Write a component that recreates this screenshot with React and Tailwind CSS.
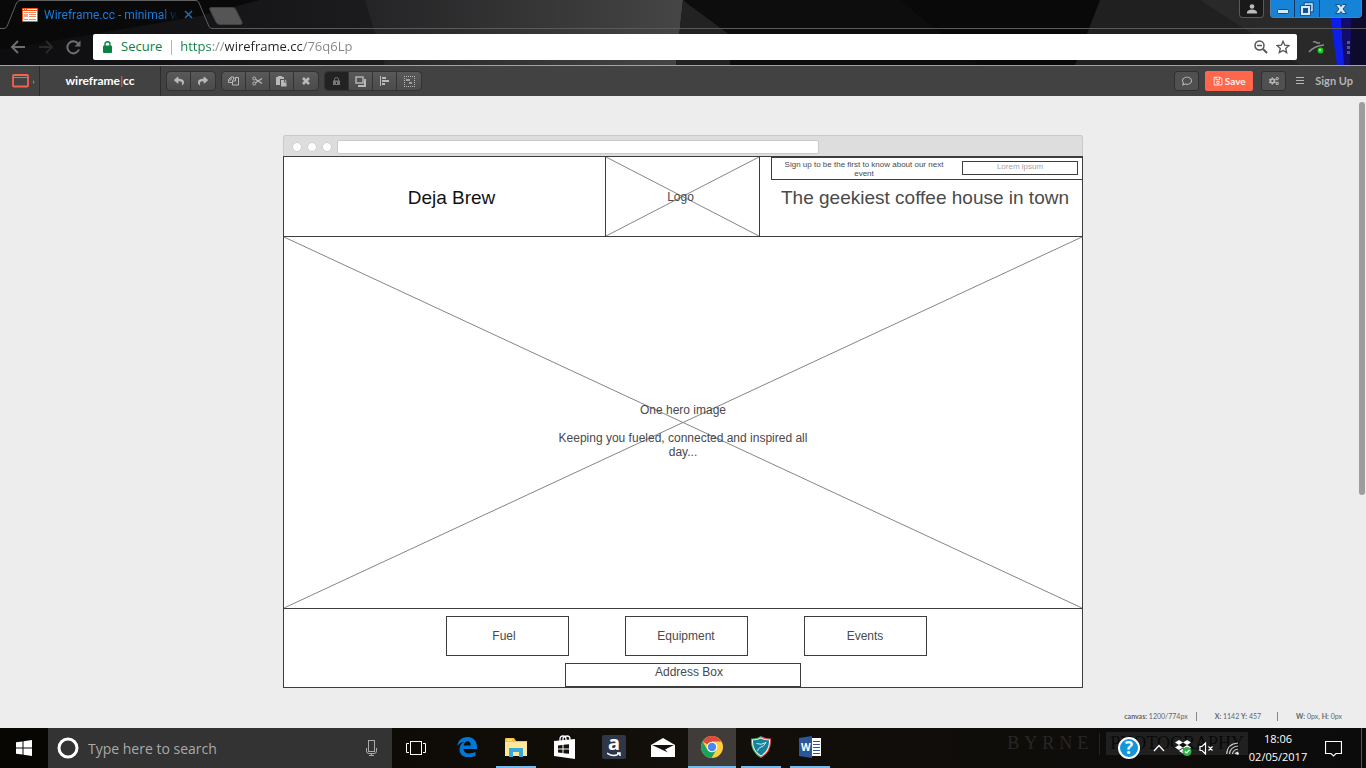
import React from "react";
import { FaReply, FaShare, FaRegComment, FaRegSave, FaCogs } from "react-icons/fa";

function Cross() {
  return (
    <svg className="absolute inset-0 h-full w-full" viewBox="0 0 100 100" preserveAspectRatio="none" aria-hidden="true">
      <path d="M0 0L100 100M100 0L0 100" stroke="#858585" strokeWidth="1" vectorEffect="non-scaling-stroke" fill="none" />
    </svg>
  );
}

function WindowBackdrop() {
  return (
    <>
      <svg className="absolute inset-0 h-full w-full" viewBox="0 0 1366 65" preserveAspectRatio="none" aria-hidden="true">
        <defs>
          <linearGradient id="glass" x1="0" x2="1" y1="0" y2="0">
            <stop offset="0" stopColor="#0d0c0f" />
            <stop offset="1" stopColor="#1c1b1e" />
          </linearGradient>
          <linearGradient id="sheen" x1="0" x2="1" y1="0" y2="0">
            <stop offset="0" stopColor="#242426" />
            <stop offset="1" stopColor="#454545" />
          </linearGradient>
        </defs>
        <path d="M0 0H1366V65H0Z" fill="#090909" />
        <path d="M0 65V50L200 16 260 0H370L390 65Z" fill="url(#glass)" />
        <path d="M365 0H683L676 65H385Z" fill="url(#sheen)" />
        <path d="M683 0L730 35V65H676Z" fill="#222223" />
        <path d="M683 0H900L980 65H730V35Z" fill="#0d0d0d" />
        <path d="M1100 0H1366V65H1075Z" fill="#202021" />
        <path d="M1200 0H1366V65H1300Z" fill="#29292a" />
      </svg>
      <svg className="absolute top-0 right-0" width="60" height="65" aria-hidden="true">
        <path d="M20 0H60V65H42Z" fill="#0d0b2c" />
        <path d="M22 0H34L38 65H31Z" fill="#0d1ee8" />
        <path d="M34 0H46L44 65H38Z" fill="#140c6a" />
      </svg>
    </>
  );
}

function BrowserTabs() {
  return (
    <div className="flex h-[29px] items-start">
      <div className="relative h-[29px] w-[212px]">
        <svg className="absolute inset-0" width="212" height="29" fill="none" aria-hidden="true">
          <path d="M0 28.500H4Q6 28.500 7 26.500L16.500 3Q18 .5 20 .5H196Q198 .5 199 3L209 26.500Q210 28.500 212 28.500" stroke="#5f6061" />
        </svg>
        <div className="relative flex h-[29px] items-center pl-[22px]">
          <svg width="16" height="14" viewBox="0 0 16 14" aria-hidden="true">
            <rect width="16" height="14" rx="1" fill="#f2541b" />
            <path d="M1 3h14v10H1z" fill="#fff" />
            <path d="M1 1h1v1H1zM3 1h1v1H3zM5 1h10v1H5z" fill="#fff" />
            <path d="M2 4h12v1H2zM7 6h7v1H7zM7 8h7v1H7zM2 11h4v1H2zM7 11h7v1H7z" fill="#f58a5c" />
            <path d="M2 6h4v3H2z" fill="#f9a98a" />
          </svg>
          <span className="ml-[6px] w-[134px] bg-linear-to-r from-[#1a7fe0] from-88% to-transparent bg-clip-text font-['Roboto',sans-serif] text-[12px] whitespace-nowrap text-transparent">
            Wireframe.cc - minimal w
          </span>
          <button aria-label="Close tab" className="ml-[6px]">
            <svg width="9" height="9" stroke="#1d6eb0" strokeWidth="1.500" aria-hidden="true"><path d="M1 1L8 8M8 1L1 8" /></svg>
          </button>
        </div>
      </div>
      <div className="flex h-[29px] flex-1 items-start border-b border-[#5a5a5b]">
        <button aria-label="New tab" className="mt-[7px] ml-[-3px]">
          <svg width="34" height="18" aria-hidden="true"><path d="M2 .5H24Q26 .5 27 3L33 15Q34 17.500 31 17.500H11Q8 17.500 7 15L1 3Q0 .5 2 .5Z" fill="#555" stroke="#414142" /></svg>
        </button>
        <div className="flex-1" />
        <button aria-label="Profile" className="mr-[6px] flex h-[18px] w-[25px] items-center justify-center rounded-b-[4px] border border-t-0 border-[#58595a] bg-[#19191a]">
          <svg width="10" height="10" fill="#bcbcbc" aria-hidden="true"><circle cx="5" cy="2.500" r="2.300" /><path d="M0 9.500V8Q1 5.500 5 5.500T10 8V9.500Z" /></svg>
        </button>
        <div className="mr-[4px] flex h-[18px] overflow-hidden rounded-b-[4px] border border-t-0 border-[#5d7ba0] bg-[#1583d7]">
          <button aria-label="Minimise" className="flex w-[24px] items-center justify-center border-r border-[#14365e]">
            <svg width="12" height="14" aria-hidden="true"><rect x=".5" y="7.500" width="11" height="4" rx="1" fill="#d5eaf8" stroke="#174c82" /></svg>
          </button>
          <button aria-label="Restore" className="flex w-[25px] items-center justify-center border-r border-[#14365e]">
            <svg width="14" height="14" fill="none" aria-hidden="true">
              <path d="M5.500 4V2H12V8.500H10" stroke="#174c82" strokeWidth="3.500" /><path d="M5.500 4V2H12V8.500H10" stroke="#d5eaf8" strokeWidth="1.500" />
              <rect x="2" y="5" width="7" height="7" fill="#1583d7" stroke="#174c82" strokeWidth="3.500" /><rect x="2" y="5" width="7" height="7" stroke="#d5eaf8" strokeWidth="2" /><rect x="4" y="7" width="3" height="3" fill="#174c82" />
            </svg>
          </button>
          <button aria-label="Close" className="flex w-[41px] items-center justify-center">
            <svg width="12" height="12" aria-hidden="true"><path d="M.5 1.500H4.500L6 3.500 7.500 1.500H11.500L8 6 11.500 10.500H7.500L6 8.500 4.500 10.500H.5L4 6Z" fill="#d5eaf8" stroke="#174c82" /></svg>
          </button>
        </div>
      </div>
    </div>
  );
}

function AddressBar() {
  return (
    <div className="flex h-[36px] items-center">
      <button aria-label="Back" className="ml-[10px]">
        <svg width="16" height="14" fill="none" stroke="#6e6e6e" strokeWidth="2" aria-hidden="true"><path d="M15 7H2M8 1L2 7l6 6" /></svg>
      </button>
      <button aria-label="Forward" className="ml-[12px]">
        <svg width="16" height="14" fill="none" stroke="#29292a" strokeWidth="2" aria-hidden="true"><path d="M1 7h13M8 1l6 6-6 6" /></svg>
      </button>
      <button aria-label="Reload" className="ml-[12px]">
        <svg width="16" height="15" fill="none" stroke="#6e6e6e" strokeWidth="2" aria-hidden="true"><path d="M12 3.500A6 6 0 1 0 13 9.500" /><path d="M14.500 .5V6.500H8.500Z" fill="#6e6e6e" stroke="none" /></svg>
      </button>
      <div className="ml-[11px] flex h-[26px] flex-1 items-center rounded-[2px] bg-white font-['Open_Sans',sans-serif] text-[13px]">
        <svg className="ml-[10px]" width="9" height="12" aria-hidden="true"><rect y="4.500" width="9" height="7.500" rx="1" fill="#0b8043" /><path d="M2 5V3a2.500 2.300 0 0 1 5 0V5" fill="none" stroke="#0b8043" strokeWidth="1.400" /></svg>
        <label htmlFor="url" className="ml-[9px] text-[#0b8043]">Secure</label>
        <span className="ml-[9px] h-[15px] w-px bg-[#b5b5b5]" />
        <input
          id="url"
          defaultValue="https://wireframe.cc/76q6Lp"
          className="ml-[8px] min-w-0 flex-1 bg-[linear-gradient(90deg,#0b8043_32px,#888_32px_45px,#222_45px_123px,#858585_123px)] bg-clip-text text-transparent outline-none"
        />
        <button aria-label="Zoom">
          <svg width="14" height="14" fill="none" stroke="#555" strokeWidth="1.500" aria-hidden="true"><circle cx="5.500" cy="5.500" r="4.500" /><path d="M3 5.500h5" /><path d="M9 9l4 4" strokeWidth="2" /></svg>
        </button>
        <button aria-label="Bookmark" className="mr-[7px] ml-[8px]">
          <svg width="14" height="14" viewBox="0 0 14 14" fill="none" stroke="#555" strokeWidth="1.300" aria-hidden="true"><path d="M7 1.300L8.700 5.200 13 5.600 9.700 8.400 10.700 12.600 7 10.400 3.300 12.600 4.300 8.400 1 5.600 5.300 5.200Z" /></svg>
        </button>
      </div>
      <button aria-label="Extension" className="ml-[11px]">
        <svg width="18" height="14" fill="none" aria-hidden="true"><path d="M1 12Q6 6 16 5M5 2Q8 1 9 3L12 3" stroke="#8b8b8b" strokeWidth="1.500" /><circle cx="12.500" cy="10.500" r="2.900" fill="#1ecb1e" /><circle cx="12" cy="10" r="1" fill="#baffb0" /></svg>
      </button>
      <button aria-label="Browser menu" className="mr-[15px] ml-[21px]">
        <svg width="4" height="14" fill="#5d5d66" aria-hidden="true"><path d="M0 1h3v3H0zM0 6h3v3H0zM0 11h3v3H0z" /></svg>
      </button>
    </div>
  );
}

function Tool({ label, dark, children }) {
  return (
    <button
      aria-label={label}
      className={
        "flex h-[18px] w-[24px] items-center justify-center border-r border-[#343434] text-[10px] last:border-r-0 " +
        (dark ? "bg-[#222] text-[#777]" : "bg-linear-to-b from-[#595959] to-[#4b4b4b] text-[#b9b9b9]")
      }
    >
      {children}
    </button>
  );
}

function ToolGroup({ children }) {
  return <div className="flex overflow-hidden rounded-[3px] outline outline-[#323232]">{children}</div>;
}

function Toolbar() {
  return (
    <div className="flex h-[30px] items-center bg-[#424242] font-['Lato',sans-serif]">
      <button aria-label="Templates" className="flex h-full w-[40px] items-center border-r border-[#2c2c2c] pl-[12px]">
        <svg width="23" height="14" fill="none" aria-hidden="true"><rect x="1" y="1" width="15" height="11.500" rx="1" stroke="#f7624b" strokeWidth="1.800" /><path d="M1 3.500h15" stroke="#f7624b" /><path d="M21 6v4l1.500-2z" fill="#8c8c8c" /></svg>
      </button>
      <a href="#home" className="flex h-full w-[121px] items-center justify-center border-r border-[#2c2c2c] text-[12px] font-bold text-white">
        wireframe<span className="font-normal text-[#f7624b]">|</span>cc
      </a>
      <div className="ml-[6px] flex gap-[7px]">
        <ToolGroup>
          <Tool label="Undo"><FaReply /></Tool>
          <Tool label="Redo"><FaShare /></Tool>
        </ToolGroup>
        <ToolGroup>
          <Tool label="Duplicate">
            <svg width="11" height="10" viewBox="0 0 11 10" fill="none" stroke="currentColor" aria-hidden="true"><path d="M4.500 6.500H.5V3.500L3 1H5.500V2.500M.5 4H3V1" /><path d="M4.500 4.500L7 1.500H10.500V9H4.500ZM4.500 5H7.500V1.500" /></svg>
          </Tool>
          <Tool label="Cut">
            <svg width="11" height="10" viewBox="0 0 11 10" fill="none" stroke="currentColor" aria-hidden="true"><circle cx="2.200" cy="2.500" r="1.500" /><circle cx="2.200" cy="7.500" r="1.500" /><path d="M3.500 3.300L10 7.500M3.500 6.700L10 2.500" strokeWidth="1.300" /></svg>
          </Tool>
          <Tool label="Paste">
            <svg width="11" height="11" viewBox="0 0 11 11" aria-hidden="true"><path d="M0 1H2V0H6V1H8V3H4V9H0Z" fill="currentColor" /><path d="M5 4H8V6.500H10.500V10.500H5Z" fill="currentColor" /><path d="M8.800 3.500L11 5.700H8.800Z" fill="currentColor" /></svg>
          </Tool>
          <Tool label="Delete">
            <svg width="8" height="8" stroke="currentColor" strokeWidth="2.600" aria-hidden="true"><path d="M1 1L7 7M7 1L1 7" /></svg>
          </Tool>
        </ToolGroup>
        <ToolGroup>
          <Tool label="Lock" dark>
            <svg width="7" height="8" aria-hidden="true"><path d="M0 3.500H7V8H0Z" fill="currentColor" /><path d="M1.500 4V2.500a2 2 0 0 1 4 0V4" fill="none" stroke="currentColor" /><path d="M3 5h1v2H3z" fill="#222" /></svg>
          </Tool>
          <Tool label="Arrange">
            <svg width="11" height="11" fill="none" stroke="currentColor" aria-hidden="true"><rect x="1" y="1" width="7" height="6" strokeWidth="1.400" /><path d="M10 3v7H3" strokeWidth="2" /></svg>
          </Tool>
          <Tool label="Align">
            <svg width="9" height="10" fill="currentColor" aria-hidden="true"><path d="M0 0h1v10H0zM2 1h4v2H2zM2 4h7v2H2zM2 7h3v2H2z" /></svg>
          </Tool>
          <Tool label="Group">
            <svg width="11" height="11" fill="none" stroke="currentColor" aria-hidden="true"><path d="M0 .5h11M.5 0v11M0 10.500h11M10.500 0v11" strokeDasharray="1 1" /><path d="M2 4h4M5 7h3" strokeWidth="1.500" /></svg>
          </Tool>
        </ToolGroup>
      </div>
      <div className="flex-1" />
      <button aria-label="Comments" className="flex h-[20px] w-[25px] items-center justify-center rounded-[3px] border border-[#303030] bg-[#505050] text-[10px] text-[#b9b9b9]"><FaRegComment /></button>
      <button className="ml-[6px] flex h-[20px] w-[48px] items-center justify-center gap-[2px] rounded-[2px] bg-[#ff664b] text-[10px] font-bold text-[#fff0ec]">
        <FaRegSave />Save
      </button>
      <button aria-label="Settings" className="ml-[8px] flex h-[20px] w-[25px] items-center justify-center rounded-[3px] border border-[#303030] bg-[#505050] text-[10px] text-[#b9b9b9]"><FaCogs /></button>
      <button aria-label="Menu" className="ml-[10px]">
        <svg width="8" height="8" stroke="#b5b5b5" aria-hidden="true"><path d="M0 .5h8M0 3.500h8M0 6.500h8" /></svg>
      </button>
      <a href="#signup" className="mr-[13px] ml-[11px] text-[11px] font-bold text-[#b5b5b5]">Sign Up</a>
    </div>
  );
}

function Wireframe() {
  return (
    <div className="mx-auto w-[800px] font-['Liberation_Sans',sans-serif] text-[12px] leading-[14px] text-[#4a4a4a]">
      <div className="flex h-[21px] items-center gap-[5px] rounded-t-[3px] border border-b-0 border-[#cacaca] bg-[#ddd] pt-px pl-[8px]">
        <span className="size-[10px] rounded-full border border-[#d0d0d0] bg-white" />
        <span className="size-[10px] rounded-full border border-[#d0d0d0] bg-white" />
        <span className="size-[10px] rounded-full border border-[#d0d0d0] bg-white" />
        <span className="h-[14px] w-[482px] rounded-[2px] border border-[#cacaca] bg-white" />
      </div>
      <div className="border border-[#3d3d3d] bg-white">
        <header className="flex h-[80px] border-b border-[#3d3d3d]">
          <h1 className="flex w-[321px] items-center justify-center pt-[2px] pl-[14px] text-[19px] text-[#111]">Deja Brew</h1>
          <div className="relative flex w-[155px] items-center justify-center border-x border-[#3d3d3d] pr-[4px]">
            <Cross />
            <span className="relative">Logo</span>
          </div>
          <div className="flex-1 pl-[11px]">
            <div className="flex h-[23px] border border-r-0 border-[#3d3d3d] pt-[2px]">
              <label htmlFor="email" className="ml-[6px] w-[172px] text-center text-[8px] leading-[9px]">Sign up to be the first to know about our next event</label>
              <input id="email" placeholder="Lorem ipsum" className="mt-px ml-[12px] h-[14px] w-[116px] border border-[#3d3d3d] pb-[3px] text-center text-[8px] outline-none placeholder:text-[#a5a5a5]" />
            </div>
            <p className="mt-[6px] pl-[10px] text-[19px] leading-[24px] whitespace-nowrap">The geekiest coffee house in town</p>
          </div>
        </header>
        <section className="relative h-[372px] border-b border-[#3d3d3d] pt-[166px]">
          <Cross />
          <div className="relative mx-auto w-[264px] text-center">
            <p>One hero image</p>
            <p className="mt-[14px]">Keeping you fueled, connected and inspired all day...</p>
          </div>
        </section>
        <nav className="flex justify-center gap-[56px] pt-[7px] pl-[6px]">
          <button className="h-[40px] w-[123px] border border-[#3d3d3d] pr-[6px]">Fuel</button>
          <button className="h-[40px] w-[123px] border border-[#3d3d3d]">Equipment</button>
          <button className="h-[40px] w-[123px] border border-[#3d3d3d]">Events</button>
        </nav>
        <address className="mx-auto mt-[7px] h-[24px] w-[236px] border border-[#3d3d3d] pt-px pl-[12px] text-center not-italic">Address Box</address>
      </div>
    </div>
  );
}

function TaskIcon({ label, line, active, children }) {
  return (
    <button aria-label={label} className={"flex h-[40px] w-[48px] flex-col items-center " + (active ? "bg-[#3f3c3a]" : "")}>
      <span className="flex h-[38px] items-center">{children}</span>
      {line && <span className={"h-[2px] bg-[#76b9ed] " + (active ? "w-[48px]" : "w-[40px]")} />}
    </button>
  );
}

function Taskbar() {
  return (
    <footer className="relative flex h-[40px] items-center bg-linear-to-r from-[#070602] via-[#130f0a] to-[#0b0b0b] font-['Open_Sans',sans-serif]">
      <div aria-hidden="true" className="absolute top-[4px] right-[118px] flex items-center font-['Liberation_Serif',serif] text-[18px] leading-[23px]">
        <span className="tracking-[5px] text-[#272727]">BYRNE</span>
        <span className="mx-[6px] h-[22px] w-px bg-[#242424]" />
        <span className="bg-[#202020] px-[4px] text-[#090909]">PHOTOGRAPHY</span>
      </div>
      <button aria-label="Start" className="flex h-full w-[48px] items-center justify-center">
        <svg width="16" height="16" viewBox="0 0 16 16" fill="#fff" aria-hidden="true"><path d="M0 2.300L6.500 1.400V7.500H0zM7.500 1.200L16 0V7.500H7.500zM0 8.500H6.500V14.600L0 13.700zM7.500 8.500H16V16L7.500 14.800z" /></svg>
      </button>
      <div className="flex h-full w-[344px] items-center bg-[#333]">
        <svg className="ml-[9px]" width="22" height="22" fill="none" aria-hidden="true"><circle cx="11" cy="11" r="9" stroke="#fff" strokeWidth="3" /></svg>
        <input aria-label="Search" placeholder="Type here to search" className="ml-[9px] min-w-0 flex-1 text-[14px] outline-none placeholder:text-[#a9a9a9]" />
        <button aria-label="Dictate" className="mr-[15px]">
          <svg width="11" height="16" fill="none" stroke="#aaa" aria-hidden="true"><rect x="2.500" y=".5" width="6" height="11" /><path d="M.5 8V11Q.5 13.500 3 13.500H8Q10.500 13.500 10.500 11V8M5.500 13.500V15.500M3 15.500H8" /></svg>
        </button>
      </div>
      <button aria-label="Task view" className="flex h-full w-[48px] items-center justify-center">
        <svg width="20" height="14" fill="none" stroke="#fff" aria-hidden="true"><rect x="4.500" y=".5" width="11" height="13" /><path d="M3 2.500H.5V11.500H3M17 2.500H19.500V11.500H17" /></svg>
      </button>
      <div className="ml-[3px] flex gap-px">
        <TaskIcon label="Edge">
          <svg width="20" height="20" viewBox="0 0 20 20" fill="#0078d7" aria-hidden="true"><path d="M.3 9C1 3.600 4.600 0 10.500 0 16.500 0 20 4.300 20 10V12H6.500C6.700 15 9 16.500 12 16.500 14.700 16.500 16.700 15.800 18.500 14.800V18.800C16.500 19.700 14 20.300 11.200 20.300 6 20.300 2.500 17.300 2.500 12.300 2.500 9 4.500 6.200 7.500 4.800 4.500 5 1.700 6.800.3 9ZM6.700 8.500H13.800C13.800 6 12.700 4.300 10.500 4.300 8.500 4.300 7 6.200 6.700 8.500Z" /></svg>
        </TaskIcon>
        <TaskIcon label="File Explorer" line>
          <svg width="22" height="19" aria-hidden="true"><path d="M0 1Q0 0 1 0H9L11 3H22V18H0Z" fill="#f5c242" /><path d="M0 4H22V18H0Z" fill="#ffe79a" /><path d="M2 2h5" stroke="#fff3c5" /><path d="M4 10H18V19H14V14H8V19H4Z" fill="#35a9df" /></svg>
        </TaskIcon>
        <TaskIcon label="Store">
          <svg width="22" height="24" aria-hidden="true"><path d="M6 6V4Q6 1 9 1T12 4V6M9 6V3Q10 1 13 1T16 4V6" fill="none" stroke="#fff" strokeWidth="1.300" /><path d="M0 6L21 4V24L0 21Z" fill="#fff" /><path d="M4 10.500L8.500 10V13.500H4zM9.500 9.800L15 9.200V13.500H9.500zM4 14.500H8.500V18L4 17.500zM9.500 14.500H15V18.800L9.500 18.200z" fill="#15110c" /></svg>
        </TaskIcon>
        <TaskIcon label="Amazon">
          <span className="relative flex size-[24px] justify-center rounded-[2px] bg-[#2d3747] font-['Noto_Sans',sans-serif] text-[20px] leading-[16px] font-bold text-white">
            a
            <svg className="absolute bottom-[2px] left-[5px]" width="15" height="5" fill="none" stroke="#fff" strokeWidth="1.500" aria-hidden="true"><path d="M0 1Q7 6 13 1M10 1h3v3" /></svg>
          </span>
        </TaskIcon>
        <TaskIcon label="Mail">
          <svg width="24" height="19" aria-hidden="true"><path d="M0 7L12 0 24 7V19H0Z" fill="#fff" /><path d="M1 7H23L14 11.500 17 14.500Z" fill="#15110c" /></svg>
        </TaskIcon>
        <TaskIcon label="Chrome" line active>
          <svg width="22" height="22" viewBox="0 0 22 22" aria-hidden="true"><circle cx="11" cy="11" r="11" fill="#ffcd42" /><path d="M11 11L1.500 5.500A11 11 0 0 1 20.500 5.500H11Z" fill="#de4a3d" /><path d="M1.500 5.500A11 11 0 0 0 10.500 22L15.500 13.500 6.300 13.500Z" fill="#1aa260" /><circle cx="11" cy="11" r="5.300" fill="#fff" /><circle cx="11" cy="11" r="4.200" fill="#4b87f0" /></svg>
        </TaskIcon>
        <TaskIcon label="Security" line>
          <svg width="22" height="22" viewBox="0 0 22 22" aria-hidden="true"><path d="M11 0Q16 3 21 2.500 22 16 11 22Z" fill="#e6533e" /><path d="M11 0Q6 3 1 2.500 0 16 11 22Z" fill="#47a75d" /><path d="M11 1.500Q15 4 20 3.500 20.500 15 11 20.500 1.500 15 2 3.500 7 4 11 1.500Z" fill="#fff" /><path d="M11 2.500Q15 4.500 19 4.200 19.500 14.500 11 19.500 2.500 14.500 3 4.200 7 4.500 11 2.500Z" fill="#16829c" /><path d="M6.500 7.500Q11 9.500 16 6.500 14 10.500 10 11.500 8 12.500 7.500 15" fill="none" stroke="#c5eef2" /></svg>
        </TaskIcon>
        <TaskIcon label="Word" line>
          <span className="relative flex h-[22px] w-[22px] items-center">
            <svg className="absolute inset-0" width="22" height="22" aria-hidden="true"><path d="M11 2H22V20H11Z" fill="#fff" /><path d="M14 5.500h7M14 8.500h7M14 11.500h7M14 14.500h7M14 17.500h7" stroke="#2b579a" /><path d="M0 2L13 0V22L0 20Z" fill="#2b579a" /></svg>
            <span className="relative pl-[2px] text-[10px] leading-[12px] font-bold text-white">W</span>
          </span>
        </TaskIcon>
      </div>
      <div className="flex-1" />
      <div className="relative flex h-full items-center">
        <button aria-label="Help" className="flex size-[22px] items-center justify-center rounded-full border-2 border-white bg-[#1296db] text-[17px] leading-[18px] font-bold text-white">?</button>
        <button aria-label="Show hidden icons" className="ml-[13px]"><svg width="12" height="8" fill="none" stroke="#fff" strokeWidth="1.300" aria-hidden="true"><path d="M1 7L6 1.500 11 7" /></svg></button>
        <button aria-label="Dropbox" className="ml-[10px]">
          <svg width="17" height="16" aria-hidden="true"><path d="M4 0L8 2.500 12 0 16 2.500 12 5 16 7.500 12 10 8 7.500 4 10 0 7.500 4 5 0 2.500Z" fill="#fff" /><path d="M8 2.500L12 5 8 7.500 4 5Z" fill="#111" /><path d="M4 11L8 8.500 12 11 8 13.500Z" fill="#fff" /><circle cx="12" cy="11.500" r="4.500" fill="#2fb344" /><path d="M10 11.500l1.500 1.500 3-3" fill="none" stroke="#fff" strokeWidth="1.200" /></svg>
        </button>
        <button aria-label="Volume" className="ml-[7px]"><svg width="15" height="13" fill="none" stroke="#fff" aria-hidden="true"><path d="M1 4.500H3L6.500 1V12L3 8.500H1ZM9.500 4.500l4 4M13.500 4.500l-4 4" strokeWidth="1.200" /></svg></button>
        <button aria-label="Network" className="ml-[12px]"><svg width="13" height="13" fill="none" stroke="#ccc" aria-hidden="true"><path d="M.8 12Q1 2 12 1M3.500 12Q4 5 12 4M6.500 12Q7 8 12 7M9 12Q9.500 10.500 12 10" strokeWidth="1.200" /><circle cx="11.500" cy="11.500" r="1.300" fill="#fff" stroke="none" /></svg></button>
        <time className="ml-[9px] w-[60px] text-center text-[11px] leading-[18px] text-white">18:06<br />02/05/2017</time>
        <button aria-label="Notifications" className="ml-[17px]"><svg width="17" height="17" fill="none" stroke="#fff" aria-hidden="true"><path d="M.5 1.500H16.500V13.500H11L8.500 16 6 13.500H.5Z" strokeWidth="1.200" /></svg></button>
        <span className="mr-[4px] ml-[19px] h-full w-px bg-[#555]" />
      </div>
    </footer>
  );
}

export default function App() {
  return (
    <div className="flex min-h-screen flex-col">
      <div className="relative border-b border-[#a3a3a3] bg-[#0b0b0c]">
        <WindowBackdrop />
        <div className="relative">
          <BrowserTabs />
          <AddressBar />
        </div>
      </div>
      <Toolbar />
      <main className="relative flex flex-1 flex-col bg-[#ededed] pt-[39px]">
        <Wireframe />
        <div className="absolute top-[6px] right-[1px] h-[393px] w-[6px] rounded-[3px] bg-[#9d9d9d]" />
        <div className="mt-auto mr-[24px] mb-[6px] flex items-center justify-end font-['Lato',sans-serif] text-[7px] leading-[12px] text-[#666]">
          <span><b>canvas:</b> 1200/774px</span>
          <span className="mr-[18px] ml-[8px] h-[9px] w-px bg-[#888]" />
          <span><b>X:</b> 1142 <b>Y:</b> 457</span>
          <span className="mr-[18px] ml-[16px] h-[9px] w-px bg-[#888]" />
          <span><b>W:</b> 0px, <b>H:</b> 0px</span>
        </div>
      </main>
      <Taskbar />
    </div>
  );
}
